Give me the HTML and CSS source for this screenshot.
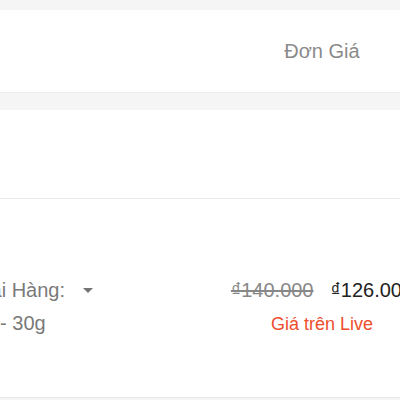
FILE: index.html
```html
<!DOCTYPE html>
<html lang="vi">
<head>
<meta charset="utf-8">
<link rel="stylesheet" href="styles.css">
</head>
<body>
<div class="page">
  <div class="header">
    <div class="col-product"></div>
    <div class="col-price">Đơn Giá</div>
  </div>
  <div class="shop"></div>
  <div class="item">
    <div class="col-product">
      <div class="variation">
        <div class="var-label">Phân Loại Hàng: <span class="caret"></span></div>
        <div class="var-value">Trà Xanh - 30g</div>
      </div>
    </div>
    <div class="col-price">
      <div class="prices">
        <span class="old">₫140.000</span>
        <span class="new">₫126.000</span>
      </div>
      <div class="live">Giá trên Live</div>
    </div>
  </div>
</div>
</body>
</html>
```
FILE: styles.css
```css
html, body {
  margin: 0;
  padding: 0;
  background: #f5f5f5;
  overflow: hidden;
  width: 400px;
  height: 400px;
}
.page {
  padding-top: 10px;
  font-family: "Liberation Sans", Arial, sans-serif;
}
.header {
  background: #fff;
  height: 82px;
  display: flex;
  align-items: center;
  border-bottom: 1px solid #eeeeee;
  font-size: 20px;
  color: #8a8a8a;
}
.col-product {
  width: 222px;
  flex: none;
}
.col-price {
  width: 200px;
  flex: none;
  text-align: center;
  white-space: nowrap;
}
.shop {
  margin-top: 17px;
  background: #fff;
  height: 88px;
  border-bottom: 1px solid #e8e8e8;
}
.item {
  background: #fff;
  height: 199px;
  border-bottom: 1px solid #e8e8e8;
  display: flex;
  align-items: flex-start;
  box-sizing: border-box;
}
.item .col-product,
.item .col-price {
  padding-top: 75px;
}
.variation {
  margin-left: -84px;
  font-size: 20px;
  line-height: 33px;
  color: #7a7a7a;
  white-space: nowrap;
}
.var-value {
  margin-left: -3px;
}
.caret {
  display: inline-block;
  width: 0;
  height: 0;
  border-left: 5px solid transparent;
  border-right: 5px solid transparent;
  border-top: 5px solid #757575;
  margin-left: 12px;
  vertical-align: 4px;
}
.prices {
  font-size: 20px;
  line-height: 32px;
  display: flex;
  justify-content: center;
  gap: 17px;
}
.old {
  color: #888;
  text-decoration: line-through;
}
.new {
  color: #222;
}
.live {
  font-size: 18px;
  line-height: 36px;
  color: #ee4d2d;
}
```
